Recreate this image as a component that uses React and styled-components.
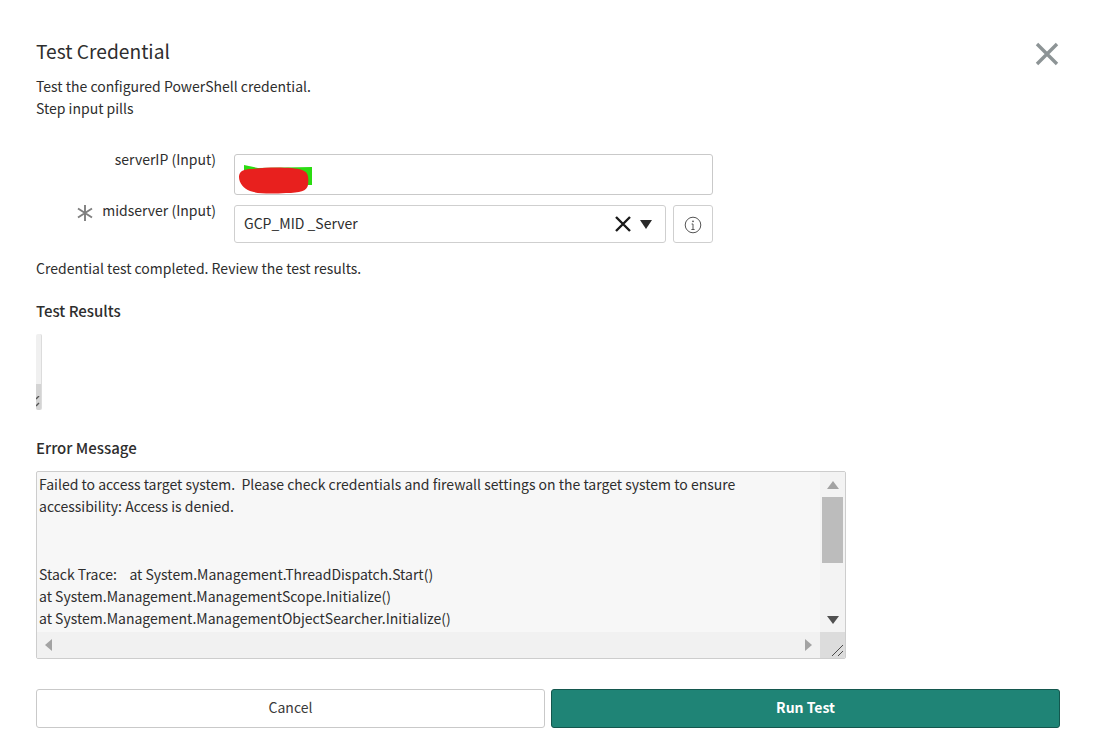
import styled, { createGlobalStyle } from "styled-components";

const GlobalStyle = createGlobalStyle`
  html, body {
    margin: 0;
    padding: 0;
    background: #ffffff;
  }
  body {
    font-family: "Noto Sans CJK SC", "Noto Sans", sans-serif;
    color: #2e2e2e;
  }
`;

const Page = styled.div`
  width: 1102px;
  height: 748px;
  box-sizing: border-box;
  padding: 37px 42px 0 36px;
  overflow: hidden;
`;

const Header = styled.div`
  display: flex;
  justify-content: space-between;
  align-items: flex-start;
`;

const Title = styled.h1`
  margin: 0;
  font-size: 19.2px;
  line-height: 28px;
  font-weight: 400;
  color: #2e2e2e;
`;

const CloseButton = styled.button`
  border: 0;
  background: none;
  padding: 0;
  margin: 4px 0 0;
  width: 26px;
  height: 26px;
  display: flex;
  color: #8d9496;
`;

const Description = styled.p`
  margin: 8px 0 0;
  font-size: 14px;
  line-height: 22px;
`;

const Form = styled.div`
  display: flex;
  flex-direction: column;
  gap: 10px;
  margin-top: 35px;
`;

const FormRow = styled.div`
  display: flex;
  align-items: flex-start;
`;

const Label = styled.label`
  width: 180px;
  margin-right: 18px;
  display: flex;
  justify-content: flex-end;
  align-items: flex-start;
  gap: 9px;
  font-size: 14px;
  line-height: 10px;
`;

const RequiredMark = styled.svg`
  margin-top: 0;
`;

const TextField = styled.div`
  position: relative;
  width: 479px;
  height: 41px;
  box-sizing: border-box;
  border: 1px solid #c9c9c9;
  border-radius: 3px;
`;

const Scribble = styled.svg`
  position: absolute;
  left: 3px;
  top: 9px;
`;

const SelectBox = styled.div`
  width: 432px;
  height: 38px;
  box-sizing: border-box;
  border: 1px solid #cfcfcf;
  border-radius: 3px;
  display: flex;
  align-items: center;
  padding: 0 13px 0 9px;
  font-size: 14px;
`;

const SelectValue = styled.span`
  flex: 1;
  padding-bottom: 2px;
`;

const SelectIcons = styled.div`
  display: flex;
  align-items: center;
  gap: 8px;
`;

const InfoButton = styled.button`
  width: 40px;
  height: 38px;
  margin-left: 7px;
  box-sizing: border-box;
  border: 1px solid #cfcfcf;
  border-radius: 3px;
  background: #fff;
  padding: 2px 0 0;
  display: flex;
  align-items: center;
  justify-content: center;
`;

const Status = styled.p`
  margin: 14px 0 0;
  font-size: 14px;
  line-height: 22px;
`;

const SectionTitle = styled.h2`
  margin: ${(p) => p.$top}px 0 0;
  font-size: 15px;
  line-height: 22px;
  font-weight: 500;
  color: #2e2e2e;
`;

const EmptyResults = styled.div`
  position: relative;
  width: 6px;
  height: 76px;
  margin-top: 12px;
  box-sizing: border-box;
  background: #f0f0f0;
  border-radius: 2px;
  border-right: 1px solid #dcdcdc;
  overflow: hidden;
`;

const ResultsThumb = styled.div`
  position: absolute;
  left: 0;
  right: 0;
  bottom: 0;
  height: 26px;
  background: #d4d4d4;
`;

const ResultsGrip = styled.svg`
  position: absolute;
  left: 0;
  bottom: 2px;
`;

const ErrorBox = styled.div`
  width: 810px;
  height: 188px;
  margin-top: 12px;
  box-sizing: border-box;
  border: 1px solid #cdcdcd;
  border-radius: 2px;
  background: #f7f7f7;
  display: grid;
  grid-template-columns: 1fr 25px;
  grid-template-rows: 160px 26px;
  overflow: hidden;
`;

const ErrorText = styled.div`
  padding: 1px 3px 0 2px;
  font-size: 14px;
  line-height: 22.4px;
  color: #2e2e2e;
  overflow: hidden;
`;

const ErrorLine = styled.div`
  margin-bottom: ${(p) => p.$gap || 0}px;
`;

const VerticalBar = styled.div`
  background: #f3f3f3;
  display: flex;
  flex-direction: column;
  align-items: center;
`;

const ArrowSlot = styled.div`
  height: 25px;
  display: flex;
  align-items: center;
  justify-content: center;
  margin-top: ${(p) => (p.$end ? "auto" : 0)};
`;

const VerticalThumb = styled.div`
  width: 21px;
  height: 66px;
  background: #bcbcbc;
`;

const HorizontalBar = styled.div`
  background: #f1f1f1;
  display: flex;
  align-items: center;
  justify-content: space-between;
  padding: 0 8px;
`;

const Corner = styled.div`
  background: #dcdcdc;
  display: flex;
  align-items: flex-end;
  justify-content: flex-end;
`;

const Actions = styled.div`
  display: grid;
  grid-template-columns: 509px 509px;
  gap: 6px;
  margin-top: 30px;
`;

const Button = styled.button`
  height: 39px;
  box-sizing: border-box;
  padding: 0 0 4px;
  border-radius: 3px;
  font-family: inherit;
  font-size: 14px;
  font-weight: ${(p) => (p.$primary ? 600 : 400)};
  color: ${(p) => (p.$primary ? "#ffffff" : "#3a3a3a")};
  background: ${(p) => (p.$primary ? "#1f8476" : "#ffffff")};
  border: 1px solid ${(p) => (p.$primary ? "#14574e" : "#c9c9c9")};
`;

const Triangle = ({ dir, color, w = 12, h = 8 }) => {
  const points = {
    up: `0,${h} ${w},${h} ${w / 2},0`,
    down: `0,0 ${w},0 ${w / 2},${h}`,
    left: `${w},0 ${w},${h} 0,${h / 2}`,
    right: `0,0 0,${h} ${w},${h / 2}`,
  }[dir];
  return (
    <svg width={w} height={h} viewBox={`0 0 ${w} ${h}`}>
      <polygon points={points} fill={color} />
    </svg>
  );
};

export default function App() {
  return (
    <Page>
      <GlobalStyle />
      <Header>
        <Title>Test Credential</Title>
        <CloseButton aria-label="Close">
          <svg width="26" height="26" viewBox="0 0 26 26">
            <path d="M3 3 L23 23 M23 3 L3 23" stroke="currentColor" strokeWidth="3.4" fill="none" />
          </svg>
        </CloseButton>
      </Header>
      <Description>
        Test the configured PowerShell credential.
        <br />
        Step input pills
      </Description>

      <Form>
        <FormRow>
          <Label>serverIP (Input)</Label>
          <TextField>
            <Scribble width="76" height="31" viewBox="0 0 76 31">
              <path d="M6 1 L20 4 L74 3 L74 21 L6 21 Z" fill="#2bdc12" />
              <path
                d="M1 13 C1 7 6 5 14 5 C30 3 55 3 64 6 C70 8 71 12 70 21 C69 27 62 29 48 29 C34 30 20 30 12 27 C6 25 1 19 1 13 Z"
                fill="#e8201e"
              />
            </Scribble>
          </TextField>
        </FormRow>
        <FormRow>
          <Label>
            <RequiredMark width="16" height="16" viewBox="0 0 16 16">
              <path
                d="M8 0 V16 M1 3.5 L15 12.5 M15 3.5 L1 12.5"
                stroke="#7f7f7f"
                strokeWidth="1.9"
                fill="none"
              />
            </RequiredMark>
            midserver (Input)
          </Label>
          <SelectBox>
            <SelectValue>GCP_MID _Server</SelectValue>
            <SelectIcons>
              <svg width="18" height="18" viewBox="0 0 18 18">
                <path d="M2 2 L16 16 M16 2 L2 16" stroke="#1a1a1a" strokeWidth="2.4" fill="none" />
              </svg>
              <Triangle dir="down" color="#2a2a2a" w={12} h={9} />
            </SelectIcons>
          </SelectBox>
          <InfoButton aria-label="Info">
            <svg width="18" height="18" viewBox="0 0 18 18">
              <circle cx="9" cy="9" r="7.8" stroke="#555" strokeWidth="1" fill="none" />
              <path d="M9 8 V13.5 M7.6 8 H9 M7.4 13.5 H10.6" stroke="#555" strokeWidth="1" fill="none" />
              <circle cx="9" cy="5.3" r="0.9" fill="#555" />
            </svg>
          </InfoButton>
        </FormRow>
      </Form>

      <Status>Credential test completed. Review the test results.</Status>

      <SectionTitle $top={21}>Test Results</SectionTitle>
      <EmptyResults>
        <ResultsThumb />
        <ResultsGrip width="5" height="12" viewBox="0 0 5 12">
          <path d="M0 3 L3 0 M0 10 L3 7" stroke="#555" strokeWidth="1.4" fill="none" />
        </ResultsGrip>
      </EmptyResults>

      <SectionTitle $top={27}>Error Message</SectionTitle>
      <ErrorBox>
        <ErrorText>
          <ErrorLine>Failed to access target system.&nbsp; Please check credentials and firewall settings on the target system to ensure</ErrorLine>
          <ErrorLine $gap={44.8}>accessibility: Access is denied.</ErrorLine>
          <ErrorLine>Stack Trace:&nbsp;&nbsp;&nbsp; at System.Management.ThreadDispatch.Start()</ErrorLine>
          <ErrorLine>at System.Management.ManagementScope.Initialize()</ErrorLine>
          <ErrorLine>at System.Management.ManagementObjectSearcher.Initialize()</ErrorLine>
        </ErrorText>
        <VerticalBar>
          <ArrowSlot>
            <Triangle dir="up" color="#a3a3a3" />
          </ArrowSlot>
          <VerticalThumb />
          <ArrowSlot $end>
            <Triangle dir="down" color="#505050" />
          </ArrowSlot>
        </VerticalBar>
        <HorizontalBar>
          <Triangle dir="left" color="#a3a3a3" w={7} h={12} />
          <Triangle dir="right" color="#a3a3a3" w={7} h={12} />
        </HorizontalBar>
        <Corner>
          <svg width="16" height="16" viewBox="0 0 16 16">
            <path d="M3 14 L14 3 M9 14 L14 9" stroke="#4a4a4a" strokeWidth="1" fill="none" />
          </svg>
        </Corner>
      </ErrorBox>

      <Actions>
        <Button>Cancel</Button>
        <Button $primary>Run Test</Button>
      </Actions>
    </Page>
  );
}
